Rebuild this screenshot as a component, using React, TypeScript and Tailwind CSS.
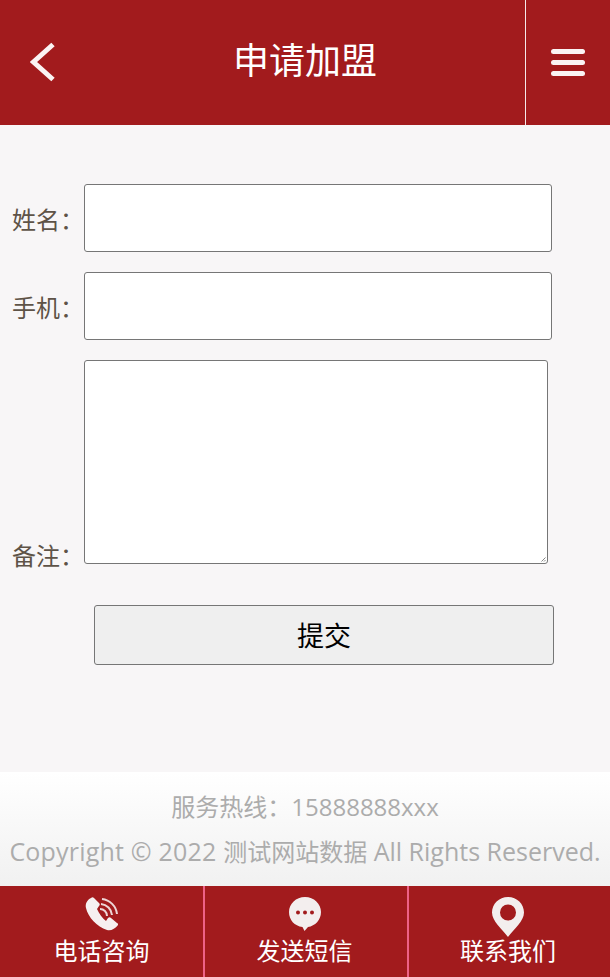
import React from "react";

const font = { fontFamily: '"Open Sans", "Noto Sans CJK SC", sans-serif' };

function Phone() {
  return (
    <svg width="34" height="34" viewBox="0 0 34 34" className="overflow-visible">
      <path fill="#f6f0f0" d="M6 1C2 3 0 7 1 11C3 20 12 30 22 33C26 34 30 32 33 28C33 27 33 26 32 26L26 21C25 20 24 20 23 21L21 24C17 21 14 16 12 12L14 9C15 8 15 7 14 6L9 1C8 0 7 0 6 1Z" />
      <g fill="none" stroke="#eed6d6" strokeWidth="2">
        <path d="M15 12A7 7 0 0 1 22 19" />
        <path d="M16 7A12 12 0 0 1 27 18" />
        <path d="M17 2A17 17 0 0 1 32 17" />
      </g>
    </svg>
  );
}

function Bubble() {
  return (
    <svg width="34" height="34" viewBox="0 0 34 34" className="overflow-visible">
      <path fill="#f3eeee" d="M17 0C26 0 33 6.800 33 15C33 23 27 29 20 30L16.500 34L14.500 30C6.500 29 1 23 1 15C1 6.800 8 0 17 0Z" />
      <circle cx="10" cy="15.500" r="2" fill="#a21b1d" />
      <circle cx="17" cy="15.500" r="2" fill="#a21b1d" />
      <circle cx="24" cy="15.500" r="2" fill="#a21b1d" />
    </svg>
  );
}

function Pin() {
  return (
    <svg width="32" height="40" viewBox="0 0 32 40" className="overflow-visible">
      <path fill="#f3eeee" fillRule="evenodd" d="M16 0C25 0 32 7 32 15.500C32 24 22 32 16 40C10 32 0 24 0 15.500C0 7 7 0 16 0ZM16 7.500A8 8 0 1 0 16 23.500A8 8 0 1 0 16 7.500Z" />
    </svg>
  );
}

function NavItem({ icon, label, className }: { icon: React.ReactNode; label: string; className: string }) {
  return (
    <div className={`flex h-full flex-col items-center pt-[11px] ${className}`}>
      <div className="flex h-[36px] items-start justify-center">{icon}</div>
      <div className="text-[24px] leading-[36px] text-white">{label}</div>
    </div>
  );
}

export default function App() {
  return (
    <div className="flex h-[977px] w-[610px] flex-col overflow-hidden bg-[#f8f6f7]" style={font}>
      <header className="flex h-[125px] shrink-0 items-center bg-[#a21b1d]">
        <div className="flex h-full w-[85px] items-center pb-[1px] pl-[30px]">
          <svg width="26" height="40" viewBox="0 0 26 40">
            <path d="M23 2.500L3.500 20L23 37.500" fill="none" stroke="#fbf3f3" strokeWidth="5" />
          </svg>
        </div>
        <h1 className="flex-1 pb-[4px] text-center text-[36px] font-normal leading-none text-white">申请加盟</h1>
        <div className="flex h-full w-[85px] items-center justify-center border-l border-[#f5e9e9]">
          <div className="flex w-[34px] flex-col gap-[6px] pb-[1px]">
            <div className="h-[5px] rounded-[3px] bg-[#fbf3f3]" />
            <div className="h-[5px] rounded-[3px] bg-[#fbf3f3]" />
            <div className="h-[5px] rounded-[3px] bg-[#fbf3f3]" />
          </div>
        </div>
      </header>

      <main className="flex-1 pl-[12px] pt-[59px]">
        <div className="mb-[20px] flex items-center">
          <label className="w-[72px] pt-[4px] text-[24px] text-[#5e5347]">姓名：</label>
          <input className="h-[68px] w-[468px] rounded-[3px] border border-[#767676] bg-white" />
        </div>
        <div className="mb-[20px] flex items-center">
          <label className="w-[72px] pt-[4px] text-[24px] text-[#5e5347]">手机：</label>
          <input className="h-[68px] w-[468px] rounded-[3px] border border-[#767676] bg-white" />
        </div>
        <div className="flex items-end">
          <label className="w-[72px] text-[24px] leading-[16px] text-[#5e5347]">备注：</label>
          <div className="relative h-[204px] w-[464px]">
            <textarea className="block h-full w-full resize-none rounded-[3px] border border-[#767676] bg-white" />
            <svg width="5" height="5" viewBox="0 0 5 5" className="absolute bottom-[2px] right-[2px]">
              <path d="M0.500 4.500L4.500 0.500M3 4.500L4.500 3" stroke="#888" strokeWidth="1" fill="none" />
            </svg>
          </div>
        </div>
        <button className="ml-[82px] mt-[41px] block h-[60px] w-[460px] rounded-[3px] border border-[#767676] bg-[#efefef] pt-[3px] text-[27px] text-black">提交</button>
      </main>

      <footer className="flex h-[114px] shrink-0 flex-col items-center bg-gradient-to-b from-white to-[#f1f1f1] pt-[17px] text-[24px] text-[#acacac]">
        <div className="leading-[36px]">服务热线：15888888xxx</div>
        <div className="mt-[8px] whitespace-nowrap leading-[36px]">
          <span className="text-[25px] tracking-[0.2px]">Copyright © 2022 </span>测试网站数据<span className="text-[25px]"> All Rights Reserved.</span>
        </div>
      </footer>

      <nav className="flex h-[91px] shrink-0 bg-[#a21b1d]">
        <NavItem icon={<Phone />} label="电话咨询" className="w-[203px]" />
        <NavItem icon={<Bubble />} label="发送短信" className="w-[206px] border-x-2 border-[#ee6287] pr-[3px]" />
        <NavItem icon={<Pin />} label="联系我们" className="flex-1 pr-[3px]" />
      </nav>
    </div>
  );
}
